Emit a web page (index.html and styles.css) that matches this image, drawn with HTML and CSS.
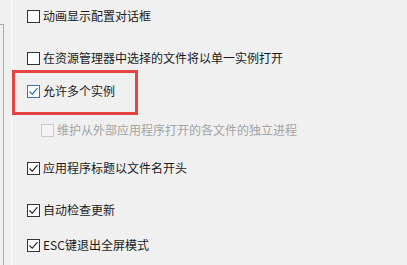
FILE: index.html
```html
<!DOCTYPE html>
<html lang="zh-CN">
<head>
<meta charset="utf-8">
<link rel="stylesheet" href="styles.css">
</head>
<body>
<div class="page">
  <div class="sidebar"><div class="frame"></div></div>
  <div class="content">
    <label class="row r1"><span class="box"></span><span class="text">动画显示配置对话框</span></label>
    <label class="row r2"><span class="box"></span><span class="text">在资源管理器中选择的文件将以单一实例打开</span></label>
    <div class="highlight">
      <label class="row r3"><span class="box box-blue"><svg viewBox="0 0 11 11" width="11" height="11"><polyline points="1.5,5.5 4.2,8.2 9.5,2.2" fill="none" stroke="#2a6cb6" stroke-width="1.1"/></svg></span><span class="text">允许多个实例</span></label>
    </div>
    <label class="row r4 disabled"><span class="box"></span><span class="text">维护从外部应用程序打开的各文件的独立进程</span></label>
    <label class="row r5"><span class="box"><svg viewBox="0 0 11 11" width="11" height="11"><polyline points="1.5,5.5 4.2,8.2 9.5,2.2" fill="none" stroke="#222" stroke-width="1.1"/></svg></span><span class="text">应用程序标题以文件名开头</span></label>
    <label class="row r6"><span class="box"><svg viewBox="0 0 11 11" width="11" height="11"><polyline points="1.5,5.5 4.2,8.2 9.5,2.2" fill="none" stroke="#222" stroke-width="1.1"/></svg></span><span class="text">自动检查更新</span></label>
    <label class="row r7"><span class="box"><svg viewBox="0 0 11 11" width="11" height="11"><polyline points="1.5,5.5 4.2,8.2 9.5,2.2" fill="none" stroke="#222" stroke-width="1.1"/></svg></span><span class="text">ESC键退出全屏模式</span></label>
  </div>
</div>
</body>
</html>
```
FILE: styles.css
```css
html, body {
  margin: 0;
  padding: 0;
  background: #f0f0f0;
}
.page {
  display: flex;
  width: 407px;
  height: 265px;
  overflow: hidden;
  font-family: "Noto Sans CJK SC", "Microsoft YaHei", sans-serif;
  font-size: 12px;
  color: #1a1a1a;
}
.sidebar {
  width: 11px;
  flex: none;
  border-right: 1px solid #fafafa;
  background: #efefef;
}
.frame {
  margin-top: 24px;
  width: 3px;
  height: 260px;
  border-top: 1px solid #a8a8a8;
  border-right: 1px solid #a8a8a8;
}
.content {
  flex: 1;
  display: flex;
  flex-direction: column;
  align-items: flex-start;
}
.row {
  display: flex;
  align-items: center;
  height: 20px;
  padding-left: 15px;
  line-height: 20px;
  white-space: nowrap;
}
.box {
  width: 11px;
  height: 11px;
  border: 1px solid #333;
  background: #fff;
  flex: none;
  display: flex;
}
.box-blue {
  border-color: #3a74b0;
}
.text {
  margin-left: 3px;
}
.r1 { margin-top: 6px; }
.r2 { margin-top: 22px; }
.highlight {
  margin-top: 2px;
  width: 120px;
  padding: 8px 0 11px 0;
  border: 3px solid #e34444;
}
.highlight .row {
  padding-left: 12px;
}
.r4 {
  margin-top: 5px;
  padding-left: 29px;
}
.disabled .text { color: #a3a3a3; }
.disabled .box { border-color: #cacaca; background: #f4f4f4; }
.r5 { margin-top: 18px; }
.r6 { margin-top: 22px; }
.r7 { margin-top: 15px; }
```
